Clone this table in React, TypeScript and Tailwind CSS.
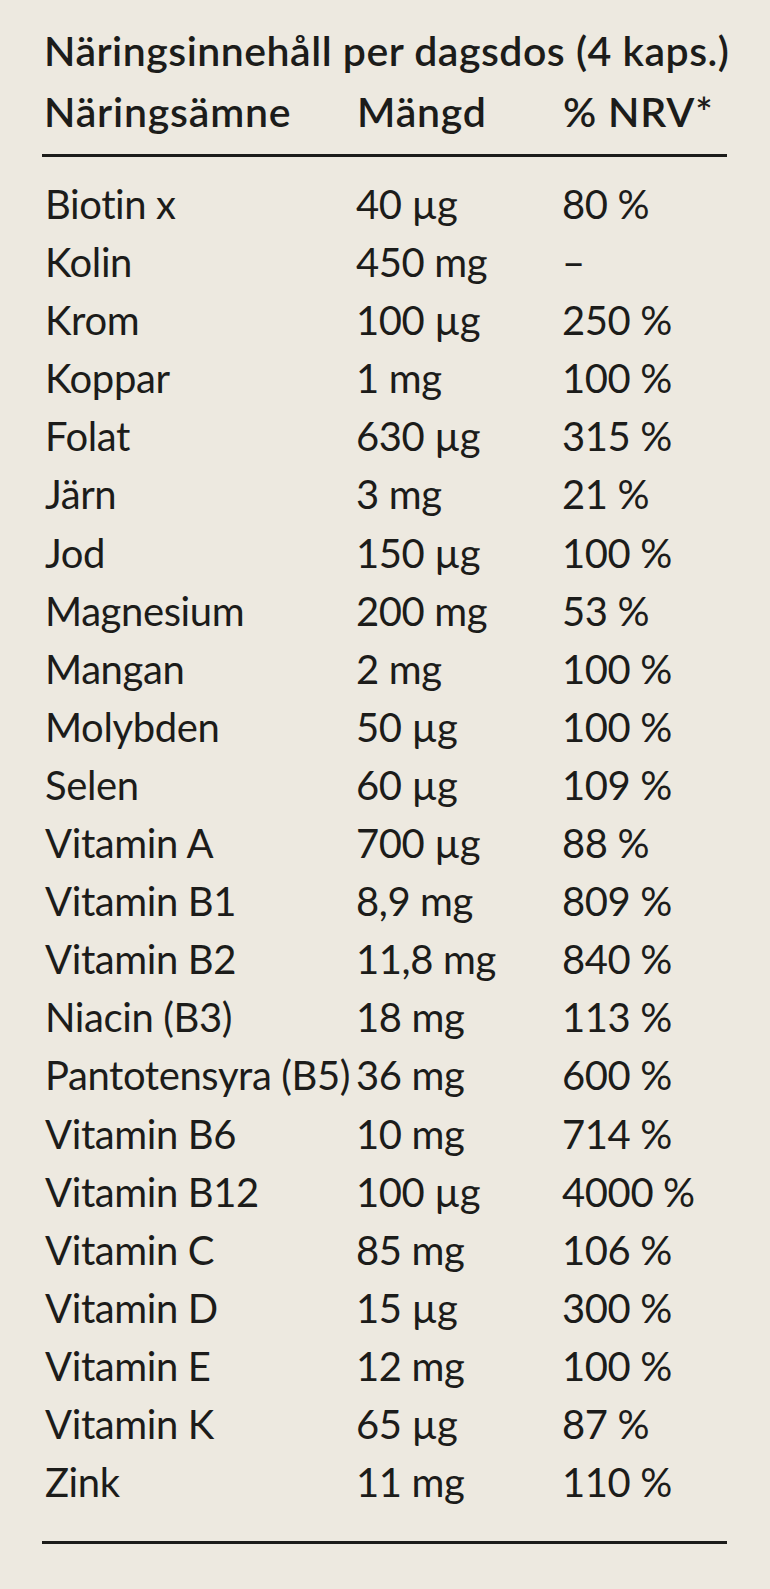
import React from "react";

const rows: [string, string, string][] = [
  ["Biotin x", "40 µg", "80 %"],
  ["Kolin", "450 mg", "–"],
  ["Krom", "100 µg", "250 %"],
  ["Koppar", "1 mg", "100 %"],
  ["Folat", "630 µg", "315 %"],
  ["Järn", "3 mg", "21 %"],
  ["Jod", "150 µg", "100 %"],
  ["Magnesium", "200 mg", "53 %"],
  ["Mangan", "2 mg", "100 %"],
  ["Molybden", "50 µg", "100 %"],
  ["Selen", "60 µg", "109 %"],
  ["Vitamin A", "700 µg", "88 %"],
  ["Vitamin B1", "8,9 mg", "809 %"],
  ["Vitamin B2", "11,8 mg", "840 %"],
  ["Niacin (B3)", "18 mg", "113 %"],
  ["Pantotensyra (B5)", "36 mg", "600 %"],
  ["Vitamin B6", "10 mg", "714 %"],
  ["Vitamin B12", "100 µg", "4000 %"],
  ["Vitamin C", "85 mg", "106 %"],
  ["Vitamin D", "15 µg", "300 %"],
  ["Vitamin E", "12 mg", "100 %"],
  ["Vitamin K", "65 µg", "87 %"],
  ["Zink", "11 mg", "110 %"],
];

export default function App() {
  return (
    <div
      className="min-h-[1589px] w-[770px] bg-[#ede9e0] text-[#1c1c1a] pt-[20px] pl-[42px] pr-[43px]"
      style={{ fontFamily: "Lato, 'Open Sans', sans-serif" }}
    >
      <h1 className="text-[41px] leading-[61px] font-semibold tracking-[0.5px] whitespace-nowrap pl-[2px]">
        Näringsinnehåll per dagsdos (4 kaps.)
      </h1>
      <div className="grid grid-cols-[314px_206px_1fr] text-[41px] leading-[61px] font-semibold tracking-[0.8px] whitespace-nowrap pb-[12px]">
        <div className="pl-[2px]">Näringsämne</div>
        <div className="pl-[1px]">Mängd</div>
        <div className="pl-[1px]">% NRV*</div>
      </div>
      <div className="border-t-[3px] border-[#1c1c1a] pt-[18px] pb-[30px]">
        {rows.map(([n, a, p]) => (
          <div
            key={n}
            className="grid grid-cols-[314px_206px_1fr] text-[40px] leading-[58.1px] tracking-[-0.4px] whitespace-nowrap"
          >
            <div className="pl-[3px]">{n}</div>
            <div>{a}</div>
            <div>{p}</div>
          </div>
        ))}
      </div>
      <div className="border-t-[3px] border-[#1c1c1a]" />
    </div>
  );
}
